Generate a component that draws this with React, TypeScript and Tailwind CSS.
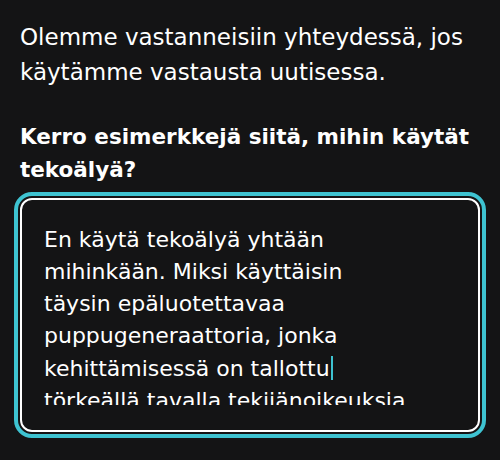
export default function App() {
  return (
    <div className="min-h-[460px] w-[500px] bg-[#141415] px-[14px] pt-[20px] font-['DejaVu_Sans',sans-serif] text-white">
      <p className="px-[6px] text-[23px] leading-[35px]">
        Olemme vastanneisiin yhteydessä, jos käytämme vastausta uutisessa.
      </p>
      <h2 className="mt-[30px] px-[6px] text-[21.5px] leading-[33px] font-bold">
        Kerro esimerkkejä siitä, mihin käytät tekoälyä?
      </h2>
      <div className="mt-[6px] rounded-[18px] border-4 border-[#3ec3d1] p-[2px]">
        <div className="rounded-[12px] border-2 border-white pt-[24px] pb-[25px] pl-[22px]">
          <div className="h-[181px] w-[366px] overflow-hidden text-[22px] leading-[32px]">
            En käytä tekoälyä yhtään mihinkään. Miksi käyttäisin täysin epäluotettavaa puppugeneraattoria, jonka kehittämisessä on tallottu
            <span className="ml-[1px] inline-block h-[24px] w-[2px] translate-y-[4px] bg-[#3ec3d1]" />
            {' '}törkeällä tavalla tekijänoikeuksia ja luovaa työtä.
          </div>
        </div>
      </div>
    </div>
  )
}
